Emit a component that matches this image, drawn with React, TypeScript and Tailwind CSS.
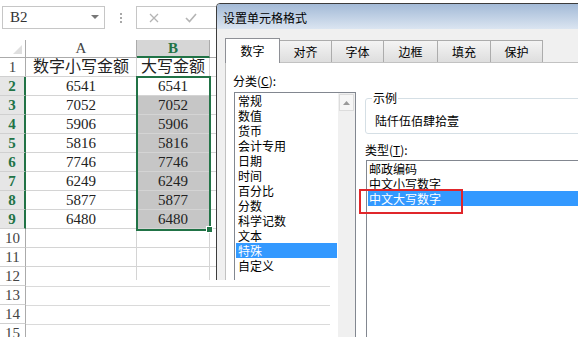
import React from 'react';

const rows: [string, string, string][] = [
  ['1', '数字小写金额', '大写金额'],
  ['2', '6541', '6541'],
  ['3', '7052', '7052'],
  ['4', '5906', '5906'],
  ['5', '5816', '5816'],
  ['6', '7746', '7746'],
  ['7', '6249', '6249'],
  ['8', '5877', '5877'],
  ['9', '6480', '6480'],
  ['10', '', ''],
  ['11', '', ''],
  ['12', '', ''],
  ['13', '', ''],
  ['14', '', ''],
  ['15', '', ''],
];

const categories = ['常规', '数值', '货币', '会计专用', '日期', '时间', '百分比', '分数', '科学记数', '文本', '特殊', '自定义'];
const types = ['邮政编码', '中文小写数字', '中文大写数字'];
const tabs = [
  { name: '对齐', w: 'w-[53px]' },
  { name: '字体', w: 'w-[53px]' },
  { name: '边框', w: 'w-[55px]' },
  { name: '填充', w: 'w-[54px]' },
  { name: '保护', w: 'w-[53px]' },
];

const Toolbar = () => (
  <div className="h-[40px] flex items-start pt-[6px] pl-[2px] font-['Liberation_Serif','Noto_Sans_CJK_SC',serif]">
    {/* name box */}
    <div className="w-[103px] h-[23px] border border-[#c6c6c6] flex items-center justify-between pl-[7px] pr-[5px] text-[15px] text-[#333]">
      <span>B2</span>
      <svg width="8" height="5" viewBox="0 0 8 5">
        <path d="M0 0 L8 0 L4 4 Z" fill="#777" />
      </svg>
    </div>
    <div className="w-[31px] h-[23px] flex flex-col items-center justify-center gap-[2px]">
      <div className="w-[2px] h-[2px] bg-[#a8a8a8]" />
      <div className="w-[2px] h-[2px] bg-[#a8a8a8]" />
      <div className="w-[2px] h-[2px] bg-[#a8a8a8]" />
    </div>
    {/* formula buttons */}
    <div className="w-[100px] h-[23px] border border-[#c6c6c6] flex items-center pl-[12px] gap-[26px]">
      <svg width="10" height="10" viewBox="0 0 10 10">
        <path d="M1 1 L9 9 M9 1 L1 9" stroke="#b4b4b4" strokeWidth="1.3" />
      </svg>
      <svg width="12" height="10" viewBox="0 0 12 10">
        <path d="M1 5 L4.5 8.5 L11 1" stroke="#b4b4b4" strokeWidth="1.6" fill="none" />
      </svg>
    </div>
  </div>
);

const Sheet = () => (
  <div className="relative font-['Liberation_Serif','Noto_Sans_CJK_SC',serif]">
    {/* column headers */}
    <div className="flex h-[18px] text-[15px] leading-[17px]">
      <div className="w-[26px] shrink-0 border-r border-b border-[#ababab] relative">
        <svg className="absolute right-[3px] bottom-[3px]" width="9" height="9" viewBox="0 0 9 9">
          <path d="M9 0 L9 9 L0 9 Z" fill="#dfdfdf" />
        </svg>
      </div>
      <div className="w-[111px] shrink-0 border-r border-b border-[#ababab] text-center text-[#444]">A</div>
      <div className="w-[73px] shrink-0 bg-[#d6d6d6] border-r border-[#ababab] border-b-2 border-b-[#217346] text-center font-bold text-[#217346]">B</div>
      <div className="flex-1 border-b border-[#ababab]" />
    </div>
    {rows.map(([n, a, b]) => {
      const sel = n !== '1' && Number(n) <= 9;
      const gray = sel && n !== '2';
      return (
        <div key={n} className="flex h-[19px] leading-[18px]">
          <div
            className={
              sel
                ? 'w-[26px] shrink-0 bg-[#e6e6e6] border-r-2 border-r-[#217346] border-b border-b-[#d0d0d0] text-center text-[15px] font-bold text-[#217346]'
                : 'w-[26px] shrink-0 border-r border-r-[#ababab] border-b border-b-[#d0d0d0] text-center text-[15px] text-[#444]'
            }
          >
            {n}
          </div>
          <div
            className={
              n === '1'
                ? 'w-[111px] shrink-0 border-r border-b border-[#d4d4d4] text-center text-[16px] text-[#222]'
                : 'w-[111px] shrink-0 border-r border-b border-[#d4d4d4] text-center text-[15px] text-[#222]'
            }
          >
            {a}
          </div>
          <div
            className={
              gray
                ? 'w-[73px] shrink-0 bg-[#c6c6c6] border-r border-b border-[#d4d4d4] text-center text-[15px] text-[#222]'
                : n === '1'
                ? 'w-[73px] shrink-0 border-r border-b border-[#d4d4d4] text-center text-[16px] text-[#222]'
                : 'w-[73px] shrink-0 border-r border-b border-[#d4d4d4] text-center text-[15px] text-[#222]'
            }
          >
            {b}
          </div>
          <div className="flex-1 border-b border-[#d4d4d4]" />
        </div>
      );
    })}
    {/* selection B2:B9 */}
    <div className="absolute left-[136px] top-[36px] w-[75px] h-[155px] border-2 border-[#217346]" />
    <div className="absolute left-[206px] top-[186px] w-[7px] h-[7px] bg-[#217346] border border-white" />
  </div>
);

const Dialog = () => (
  <div className="absolute left-[216px] top-[3px] w-[380px] h-[340px] overflow-hidden border border-[#3c3c3c] rounded-tl-[4px] flex flex-col bg-[#f0f0f0] font-['Noto_Sans_CJK_SC',sans-serif] text-[12px] text-black">
    <div className="h-[25px] shrink-0 bg-linear-to-b from-[#a3bad7] to-[#dbe5f1] pl-[6px] leading-[27px]">设置单元格格式</div>
    <div className="flex-1 pl-[8px] pt-[9px] flex flex-col">
      {/* tabs */}
      <div className="flex items-end h-[24px]">
        <div className="relative z-10 w-[55px] h-[25px] -mb-px bg-white border border-b-0 border-[#8e9096] text-center leading-[24px]">数字</div>
        {tabs.map((t) => (
          <div
            key={t.name}
            className={`${t.w} h-[22px] border border-b-0 border-[#acacac] bg-linear-to-b from-[#f4f4f4] to-[#dedede] text-center leading-[21px] -ml-px`}
          >
            {t.name}
          </div>
        ))}
      </div>
      {/* panel */}
      <div className="flex-1 bg-white border-t border-l border-[#c2c2c2] flex pl-[8px] pt-[8px]">
        <div className="w-[122px] shrink-0 flex flex-col">
          <div className="h-[20px] leading-[20px] -ml-px">
            分类(<span className="underline">C</span>):
          </div>
          <div className="mt-px h-[260px] border border-[#828790] flex">
            <div className="flex-1 px-px">
              {categories.map((c) => (
                <div
                  key={c}
                  className={
                    c === '特殊'
                      ? 'h-[15px] leading-[15px] pl-[2px] bg-[#3399ff] text-white'
                      : 'h-[15px] leading-[15px] pl-[2px]'
                  }
                >
                  {c}
                </div>
              ))}
            </div>
            <div className="w-[17px] bg-[#f0f0f0]">
              <div className="h-[17px] mx-[1px] mt-[1px] bg-[#f6f6f6] border border-[#dcdcdc] flex items-center justify-center">
                <svg width="7" height="4" viewBox="0 0 7 4">
                  <path d="M0 4 L3.5 0 L7 4 Z" fill="#9a9a9a" />
                </svg>
              </div>
            </div>
          </div>
        </div>
        <div className="w-[260px] shrink-0 ml-[9px] flex flex-col">
          <div className="relative mt-[27px] h-[36px] border border-[#d5dfe5] rounded-[3px]">
            <div className="absolute -top-[10px] left-[6px] bg-white px-px leading-[18px]">示例</div>
            <div className="pl-[9px] pt-[13px] leading-[18px]">陆仟伍佰肆拾壹</div>
          </div>
          <div className="mt-[7px] h-[18px] leading-[18px]">
            类型(<span className="underline">T</span>):
          </div>
          <div className="mt-px ml-px h-[200px] border border-[#828790] px-px">
            {types.map((t) => (
              <div
                key={t}
                className={
                  t === '中文大写数字'
                    ? 'h-[15px] leading-[15px] pl-px bg-[#3399ff] text-white'
                    : 'h-[15px] leading-[15px] pl-px'
                }
              >
                {t}
              </div>
            ))}
          </div>
        </div>
      </div>
    </div>
  </div>
);

export default function App() {
  return (
    <div className="relative w-[578px] h-[337px] overflow-hidden bg-white">
      <Toolbar />
      <Sheet />
      <Dialog />
      {/* washed-out patch at the bottom */}
      <div className="absolute left-[26px] top-[280px] w-[312px] h-[57px] bg-white">
        <div className="w-[304px] h-[7px] border-b border-[#dadada]" />
        <div className="w-[304px] h-[19px] border-b border-[#dadada]" />
        <div className="w-[304px] h-[19px] border-b border-[#dadada]" />
      </div>
      {/* red highlight */}
      <div className="absolute left-[359px] top-[189px] w-[104px] h-[25px] border-2 border-[#e0262b]" />
    </div>
  );
}
